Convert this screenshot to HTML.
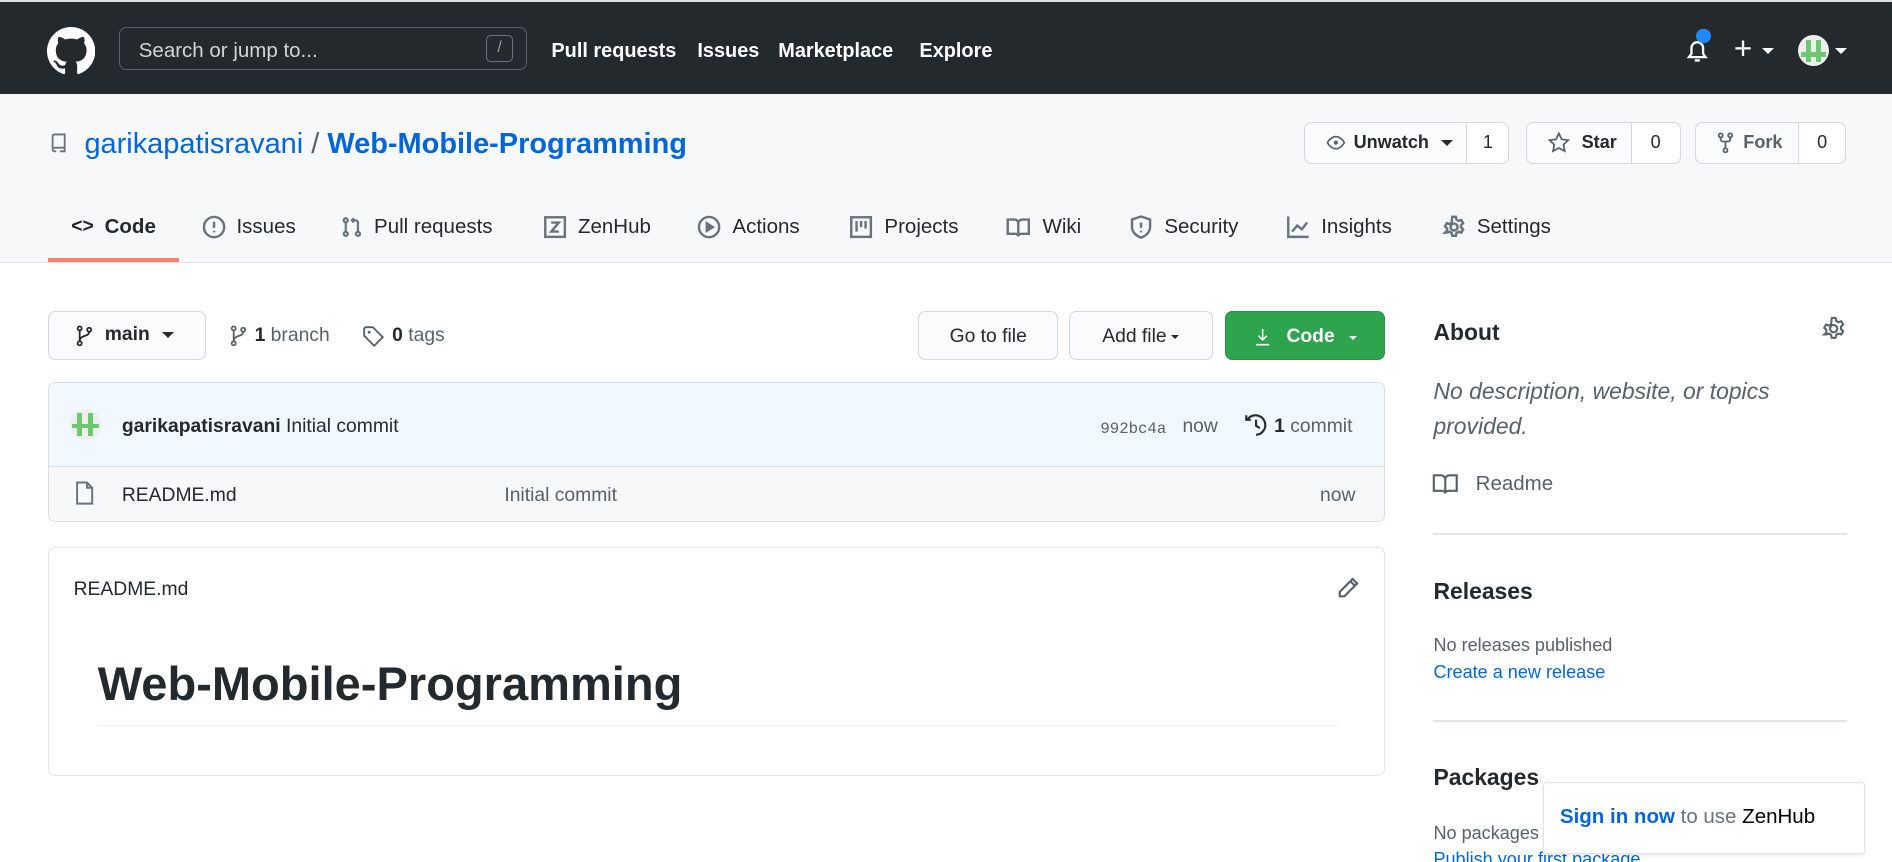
<!DOCTYPE html>
<html><head><meta charset="utf-8"><style>
html,body{margin:0;padding:0;background:#fff;overflow:hidden}
body{width:1892px;height:862px}
#w{zoom:1.2066;width:1568px;height:714px;position:relative;font-family:"Liberation Sans",sans-serif;color:#24292e}
.a{position:absolute;white-space:nowrap}
.hdr{left:0;top:2px;width:1568px;height:76px;background:#24292e}
.nav{color:#fff;font-weight:bold;font-size:16.5px;top:33px}
.rh{left:0;top:78px;width:1568px;height:139px;background:#f6f8fa;border-bottom:1px solid #e1e4e8}
.tab{top:178px;font-size:17px;color:#24292e;display:flex;align-items:center;gap:9px}
.tab svg{stroke:#6a737d;fill:none;stroke-width:1.6}
.btn{border:1px solid #d4d7db;border-radius:6px;background:#fafbfc;font-size:16px;display:flex;align-items:center;box-sizing:border-box}
.cnt{background:#fff;border-left:1px solid #d4d7db;height:100%;display:flex;align-items:center;justify-content:center}
svg{display:block}
</style></head><body><div id="w">
<div class="a" style="left:0;top:0;width:1568px;height:2px;background:#ddd"></div>
<div class="a hdr"></div>
<svg class="a" style="left:39px;top:22px" width="40" height="40" viewBox="0 0 16 16"><path fill="#fff" d="M8 0C3.580 0 0 3.58 0 8c0 3.54 2.29 6.53 5.47 7.59.4.07.55-.17.55-.38 0-.19-.01-.82-.01-1.49-2.010.37-2.53-.49-2.69-.94-.09-.23-.48-.94-.82-1.130-.28-.15-.68-.52-.01-.53.63-.01 1.08.58 1.23.82.72 1.21 1.87.87 2.33.66.07-.52.28-.87.51-1.07-1.78-.2-3.64-.89-3.64-3.95 0-.87.31-1.59.82-2.15-.08-.2-.36-1.02.08-2.12 0 0 .67-.21 2.2.82.64-.18 1.32-.27 2-.27.68 0 1.36.09 2 .27 1.53-1.04 2.2-.82 2.2-.82.44 1.1.16 1.92.08 2.12.51.56.82 1.27.82 2.15 0 3.07-1.87 3.75-3.65 3.95.29.25.54.73.54 1.48 0 1.07-.01 1.93-.01 2.2 0 .21.15.46.55.38A8.013 8.013 0 0016 8c0-4.42-3.58-8-8-8z"/></svg>
<div class="a" style="left:99px;top:22px;width:338px;height:36px;border:1px solid #57606a;border-radius:6px;box-sizing:border-box"></div>
<div class="a" style="left:115px;top:32px;color:#d1d5da;font-size:17px">Search or jump to...</div>
<div class="a" style="left:403px;top:29px;width:22px;height:22px;border:1px solid #6a737d;border-radius:4px;box-sizing:border-box;color:#959da5;font-size:13px;text-align:center;line-height:20px">/</div>
<div class="a nav" style="left:457px">Pull requests</div>
<div class="a nav" style="left:578px">Issues</div>
<div class="a nav" style="left:645px">Marketplace</div>
<div class="a nav" style="left:762px">Explore</div>
<svg class="a" style="left:1396px;top:30px" width="22" height="24" viewBox="0 0 16 16"><path fill="none" stroke="#fff" stroke-width="1.4" d="M3 12h10l-1.5-2V6.5a3.5 3.5 0 00-7 0V10z M6.5 14h3"/></svg>
<div class="a" style="left:1406px;top:24px;width:12px;height:12px;border-radius:50%;background:#2188ff"></div>
<div class="a" style="left:1437px;top:26px;color:#fff;font-size:26px;line-height:30px">+</div>
<div class="a" style="left:1460px;top:40px;border:5px solid transparent;border-top-color:#fff"></div>
<div class="a" style="left:1490px;top:29px;width:26px;height:26px;border-radius:50%;background:#eee;overflow:hidden"><div style="position:absolute;left:7px;top:4px;width:4px;height:18px;background:#6cc96f"></div><div style="position:absolute;left:15px;top:4px;width:4px;height:18px;background:#6cc96f"></div><div style="position:absolute;left:3px;top:14px;width:20px;height:4px;background:#6cc96f"></div></div>
<div class="a" style="left:1521px;top:40px;border:5px solid transparent;border-top-color:#fff"></div>

<div class="a rh"></div>
<svg class="a" style="left:41px;top:109px" width="16" height="18" viewBox="0 0 16 16"><path fill="none" stroke="#6a737d" stroke-width="1.5" d="M3 13V2.5A1.5 1.5 0 014.5 1H13v11H4.5A1.5 1.5 0 003 13.5 1.5 1.5 0 004.5 15H6 M9 15h4v-3"/></svg>
<div class="a" style="left:70px;top:106px;font-size:24px;color:#0366d6">garikapatisravani <span style="color:#586069">/</span> <b>Web-Mobile-Programming</b></div>

<div class="a btn" style="left:1081px;top:101px;width:170px;height:35px;padding-left:16px"><svg width="18" height="16" viewBox="0 0 16 16"><path fill="none" stroke="#586069" stroke-width="1.4" d="M1 8s2.5-5 7-5 7 5 7 5-2.5 5-7 5-7-5-7-5z"/><circle cx="8" cy="8" r="1.7" fill="#586069"/></svg><span style="margin-left:6px;font-weight:bold;font-size:15px">Unwatch</span><span style="margin-left:10px;border:5px solid transparent;border-top-color:#24292e;margin-top:5px"></span><div class="cnt" style="margin-left:auto;width:34px;font-size:15px;border-radius:0 6px 6px 0">1</div></div>
<div class="a btn" style="left:1265px;top:101px;width:128px;height:35px;padding-left:17px"><svg width="18" height="18" viewBox="0 0 16 16"><path fill="none" stroke="#586069" stroke-width="1.3" d="M8 1l2.1 4.4 4.8.6-3.5 3.3.9 4.8L8 11.8l-4.3 2.3.9-4.8L1.1 6l4.8-.6z"/></svg><span style="margin-left:10px;font-weight:bold;font-size:15px">Star</span><div class="cnt" style="margin-left:auto;width:40px;font-size:15px;border-radius:0 6px 6px 0">0</div></div>
<div class="a btn" style="left:1405px;top:101px;width:125px;height:35px;padding-left:17px"><svg width="14" height="18" viewBox="0 0 12 16"><g fill="none" stroke="#586069" stroke-width="1.3"><circle cx="2.5" cy="2.5" r="1.5"/><circle cx="9.5" cy="2.5" r="1.5"/><circle cx="6" cy="13.5" r="1.5"/><path d="M2.5 4v1.5a1.5 1.5 0 001.5 1.5h4a1.5 1.5 0 001.5-1.5V4M6 7v5"/></g></svg><span style="margin-left:8px;font-weight:bold;font-size:15px;color:#586069">Fork</span><div class="cnt" style="margin-left:auto;width:38px;font-size:15px;border-radius:0 6px 6px 0">0</div></div>

<div class="a" style="left:40px;top:214px;width:108px;height:3px;background:#f9826c"></div>
<div class="a tab" style="left:59px"><span style="font-weight:bold;font-size:16px">&lt;&gt;</span><span style="font-weight:bold">Code</span></div>
<div class="a tab" style="left:167px"><svg width="20" height="20" viewBox="0 0 16 16"><circle cx="8" cy="8" r="6.7"/><path d="M8 4.5v4M8 10.5v1"/></svg>Issues</div>
<div class="a tab" style="left:283px"><svg width="18" height="20" viewBox="0 0 16 16"><circle cx="3.5" cy="3" r="1.5"/><circle cx="3.5" cy="13" r="1.5"/><circle cx="12.5" cy="13" r="1.5"/><path d="M3.5 4.5v7M12.5 11.5V5a2 2 0 00-2-2H8M9.5 1.5 8 3l1.5 1.5"/></svg>Pull requests</div>
<div class="a tab" style="left:450px"><svg width="20" height="20" viewBox="0 0 16 16"><rect x="1.5" y="1.5" width="13" height="13"/><path d="M5.5 5h5l-5 6h5"/></svg>ZenHub</div>
<div class="a tab" style="left:578px"><svg width="20" height="20" viewBox="0 0 16 16"><circle cx="8" cy="8" r="6.7"/><path d="M6.5 5.5v5l4-2.5z" fill="#6a737d"/></svg>Actions</div>
<div class="a tab" style="left:704px"><svg width="20" height="20" viewBox="0 0 16 16"><rect x="1.5" y="1.5" width="13" height="13"/><path d="M5 4v7M8 4v4M11 4v5"/></svg>Projects</div>
<div class="a tab" style="left:833px"><svg width="22" height="20" viewBox="0 0 16 16"><path d="M1 3h4.5A2.5 2.5 0 018 5.5V14a2 2 0 00-2-1.5H1zM15 3h-4.5A2.5 2.5 0 008 5.5V14a2 2 0 012-1.5h5z"/></svg>Wiki</div>
<div class="a tab" style="left:936px"><svg width="20" height="20" viewBox="0 0 16 16"><path d="M8 1l6 2v5c0 3.5-3 6-6 7-3-1-6-3.5-6-7V3z M8 5v3.5M8 10.5v1"/></svg>Security</div>
<div class="a tab" style="left:1066px"><svg width="20" height="20" viewBox="0 0 16 16"><path d="M1.5 1v13.5H15M4 11l3.5-4 3 2.5L14 5"/></svg>Insights</div>
<div class="a tab" style="left:1195px"><svg width="20" height="20" viewBox="0 0 16 16"><circle cx="8" cy="8" r="2.3"/><path d="M6.8 1.2h2.4l.4 1.9 1.4.8 1.8-.6 1.2 2.1-1.4 1.3v1.6l1.4 1.3-1.2 2.1-1.8-.6-1.4.8-.4 1.9H6.8l-.4-1.9-1.4-.8-1.8.6L2 11.7l1.4-1.3V8.8L2 7.5l1.2-2.1 1.8.6 1.4-.8z"/></svg>Settings</div>

<div class="a btn" style="left:40px;top:258px;width:131px;height:40px;padding-left:22px;gap:10px"><svg width="14" height="18" viewBox="0 0 12 16"><g fill="none" stroke="#24292e" stroke-width="1.3"><circle cx="2.5" cy="13.5" r="1.5"/><circle cx="2.5" cy="2.5" r="1.5"/><circle cx="9.5" cy="3.5" r="1.5"/><path d="M2.5 4v8M9.5 5c0 4-7 2-7 7"/></g></svg><b style="font-size:16px">main</b><span style="border:5px solid transparent;border-top-color:#24292e;margin-top:5px"></span></div>
<div class="a" style="left:191px;top:269px;display:flex;align-items:center;gap:6px;font-size:16px;color:#586069"><svg width="14" height="18" viewBox="0 0 12 16"><g fill="none" stroke="#586069" stroke-width="1.3"><circle cx="2.5" cy="13.5" r="1.5"/><circle cx="2.5" cy="2.5" r="1.5"/><circle cx="9.5" cy="3.5" r="1.5"/><path d="M2.5 4v8M9.5 5c0 4-7 2-7 7"/></g></svg><span><b style="color:#24292e">1</b> branch</span></div>
<div class="a" style="left:300px;top:269px;display:flex;align-items:center;gap:6px;font-size:16px;color:#586069"><svg width="19" height="19" viewBox="0 0 16 16"><path fill="none" stroke="#586069" stroke-width="1.3" d="M1.5 2.5v5l7 7 6-6-7-7h-5z"/><circle cx="5" cy="5" r="1" fill="#586069"/></svg><span><b style="color:#24292e">0</b> tags</span></div>
<div class="a btn" style="left:761px;top:258px;width:116px;height:40px;justify-content:center;padding-top:3px">Go to file</div>
<div class="a btn" style="left:886px;top:258px;width:119px;height:40px;justify-content:center;gap:4px;padding-top:3px">Add file<span style="border:4px solid transparent;border-top-color:#24292e;margin-top:3px"></span></div>
<div class="a btn" style="left:1015px;top:258px;width:133px;height:40px;justify-content:center;gap:8px;background:#2ea44f;border-color:#2a9147;color:#fff;font-weight:bold;padding-top:3px"><svg width="16" height="18" viewBox="0 0 16 16"><path fill="none" stroke="#fff" stroke-width="1.3" d="M8 1.5v9M4.5 7 8 10.5 11.5 7M2.5 14.5h11"/></svg><span style="margin-left:4px">Code</span><span style="border:4px solid transparent;border-top-color:#fff;margin-top:4px;margin-left:4px"></span></div>

<div class="a" style="left:40px;top:317px;width:1108px;height:116px;border:1px solid #d6dde5;border-radius:6px;box-sizing:border-box;overflow:hidden">
<div style="height:68px;background:#f1f8ff;border-bottom:1px solid #d8e2ec"></div><div style="height:48px;background:#f6f8fa"></div></div>
<div class="a" style="left:58px;top:339px;width:26px;height:26px;border-radius:50%;background:#eee;overflow:hidden"><div style="position:absolute;left:6px;top:3px;width:4px;height:19px;background:#6cc96f"></div><div style="position:absolute;left:15px;top:3px;width:4px;height:19px;background:#6cc96f"></div><div style="position:absolute;left:2px;top:12px;width:22px;height:4px;background:#6cc96f"></div></div>
<div class="a" style="left:101px;top:345px;font-size:16px"><b>garikapatisravani</b> Initial commit</div>
<div class="a" style="left:912px;top:348px;font-size:13px;font-family:'Liberation Mono',monospace;color:#586069">992bc4a</div>
<div class="a" style="left:980px;top:345px;font-size:16px;color:#586069">now</div>
<svg class="a" style="left:1031px;top:342px" width="20" height="20" viewBox="0 0 16 16"><path fill="none" stroke="#24292e" stroke-width="1.4" d="M2.5 4A6.5 6.5 0 118 14.5M1.5 1.5V4.5h3M8 4.5v4l2.5 1.5"/></svg>
<div class="a" style="left:1056px;top:345px;font-size:16px;color:#586069"><b style="color:#24292e">1</b> commit</div>
<svg class="a" style="left:62px;top:399px" width="16" height="20" viewBox="0 0 12 16"><path fill="none" stroke="#6a737d" stroke-width="1.3" d="M1 1h6.5L11 4.5V15H1z M7.5 1v3.5H11"/></svg>
<div class="a" style="left:101px;top:402px;font-size:16px">README.md</div>
<div class="a" style="left:418px;top:402px;font-size:16px;color:#586069">Initial commit</div>
<div class="a" style="left:1094px;top:402px;font-size:16px;color:#586069">now</div>

<div class="a" style="left:40px;top:453px;width:1108px;height:190px;border:1px solid #e1e4e8;border-radius:6px;box-sizing:border-box"></div>
<div class="a" style="left:61px;top:480px;font-size:16px">README.md</div>
<svg class="a" style="left:1107px;top:477px" width="20" height="20" viewBox="0 0 16 16"><path fill="none" stroke="#586069" stroke-width="1.4" d="M11 2l3 3-8.5 8.5H2.5v-3z M9.5 3.5l3 3"/></svg>
<div class="a" style="left:81px;top:544px;font-size:39px;font-weight:bold">Web-Mobile-Programming</div>
<div class="a" style="left:81px;top:601px;width:1027px;height:1px;background:#eaecef"></div>

<div class="a" style="left:1188px;top:264px;font-size:19px;font-weight:bold">About</div>
<svg class="a" style="left:1509px;top:262px" width="21" height="21" viewBox="0 0 16 16"><g fill="none" stroke="#586069" stroke-width="1.3"><circle cx="8" cy="8" r="2.3"/><path d="M6.8 1.2h2.4l.4 1.9 1.4.8 1.8-.6 1.2 2.1-1.4 1.3v1.6l1.4 1.3-1.2 2.1-1.8-.6-1.4.8-.4 1.9H6.8l-.4-1.9-1.4-.8-1.8.6L2 11.7l1.4-1.3V8.8L2 7.5l1.2-2.1 1.8.6 1.4-.8z"/></g></svg>
<div class="a" style="left:1188px;top:310px;font-size:19px;font-style:italic;color:#586069;line-height:29px">No description, website, or topics<br>provided.</div>
<svg class="a" style="left:1187px;top:391px" width="22" height="19" viewBox="0 0 16 14"><path fill="none" stroke="#586069" stroke-width="1.3" d="M1 2h4.5A2.5 2.5 0 018 4.5V13a2 2 0 00-2-1.5H1zM15 2h-4.5A2.5 2.5 0 008 4.5V13a2 2 0 012-1.5h5z"/></svg>
<div class="a" style="left:1223px;top:391px;font-size:17px;color:#586069">Readme</div>
<div class="a" style="left:1188px;top:442px;width:343px;height:1px;background:#e1e4e8"></div>
<div class="a" style="left:1188px;top:479px;font-size:19px;font-weight:bold">Releases</div>
<div class="a" style="left:1188px;top:526px;font-size:15px;color:#586069">No releases published</div>
<div class="a" style="left:1188px;top:549px;font-size:15px;color:#0366d6">Create a new release</div>
<div class="a" style="left:1188px;top:597px;width:343px;height:1px;background:#e1e4e8"></div>
<div class="a" style="left:1188px;top:633px;font-size:19px;font-weight:bold">Packages</div>
<div class="a" style="left:1188px;top:682px;font-size:15px;color:#586069">No packages published</div>
<div class="a" style="left:1188px;top:704px;font-size:15px;color:#0366d6">Publish your first package</div>
<div class="a" style="left:1279px;top:648px;width:267px;height:60px;background:#fff;border:1px solid #e1e4e8;border-radius:3px;box-shadow:0 1px 3px rgba(0,0,0,.1);box-sizing:border-box;font-size:17px;padding:18px 0 0 13px"><b style="color:#0366d6;font-weight:bold">Sign in now</b><span style="color:#6a737d"> to use </span><span style="color:#000">ZenHub</span></div>
</div></body></html>
